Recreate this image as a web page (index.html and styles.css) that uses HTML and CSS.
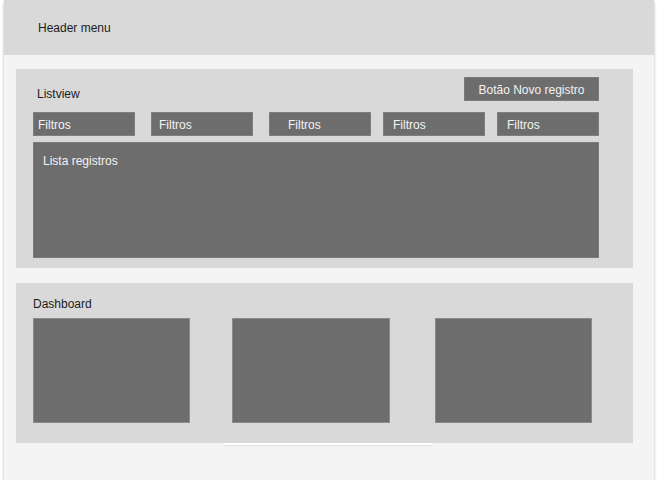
FILE: index.html
```html
<!DOCTYPE html>
<html>
<head>
<meta charset="utf-8">
<link rel="stylesheet" href="styles.css">
</head>
<body>
<div class="frame">
  <div class="header">Header menu</div>
  <div class="panel listview">
    <div class="toprow">
      <div class="title">Listview</div>
      <div class="btn">Botão Novo registro</div>
    </div>
    <div class="filters">
      <div class="filter f1">Filtros</div>
      <div class="filter f2">Filtros</div>
      <div class="filter f3">Filtros</div>
      <div class="filter f4">Filtros</div>
      <div class="filter f5">Filtros</div>
    </div>
    <div class="list">Lista registros</div>
  </div>
  <div class="panel dashboard">
    <div class="dtitle">Dashboard</div>
    <div class="cards">
      <div class="card c1"></div>
      <div class="card c2"></div>
      <div class="card c3"></div>
    </div>
  </div>
  <div class="strip"></div>
</div>
</body>
</html>
```
FILE: styles.css
```css
html, body {
  margin: 0;
  padding: 0;
  background: #ffffff;
}
body {
  font-family: "Liberation Sans", Arial, sans-serif;
  font-size: 12px;
  line-height: 14px;
  color: #1c1c1c;
}
.frame {
  margin-left: 4px;
  width: 650px;
  height: 480px;
  background: #f4f4f4;
  box-shadow: 0 2px 3px rgba(0, 0, 0, 0.28);
  overflow: hidden;
}
.header {
  height: 55px;
  background: #d9d9d9;
  box-sizing: border-box;
  padding-left: 34px;
  padding-top: 21px;
}
.panel {
  background: #d9d9d9;
  margin-left: 12px;
  width: 617px;
  box-sizing: border-box;
  padding-left: 17px;
  padding-right: 34px;
}
.listview {
  margin-top: 14px;
  height: 199px;
  padding-top: 8px;
}
.toprow {
  display: flex;
  justify-content: space-between;
  align-items: flex-start;
  height: 24px;
}
.title {
  margin-top: 10px;
  margin-left: 4px;
}
.btn {
  width: 135px;
  height: 24px;
  background: #6d6d6d;
  color: #f2f2f2;
  display: flex;
  align-items: center;
  justify-content: center;
  box-sizing: border-box;
  border: 1px solid #7a7a7a;
  padding-top: 1px;
}
.filters {
  display: flex;
  margin-top: 11px;
  height: 24px;
}
.filter {
  width: 102px;
  height: 24px;
  box-sizing: border-box;
  background: #6d6d6d;
  border: 1px solid #7e7e7e;
  color: #f4f4f4;
  display: flex;
  align-items: center;
  padding-top: 1px;
}
.f1 { padding-left: 4px; }
.f2 { margin-left: 16px; padding-left: 7px; }
.f3 { margin-left: 16px; padding-left: 18px; }
.f4 { margin-left: 12px; padding-left: 9px; }
.f5 { margin-left: 12px; padding-left: 9px; }
.list {
  margin-top: 6px;
  height: 116px;
  background: #6d6d6d;
  color: #f4f4f4;
  box-sizing: border-box;
  padding-left: 9px;
  padding-top: 11px;
  border: 1px solid #7a7a7a;
}
.dashboard {
  margin-top: 15px;
  height: 160px;
  padding-top: 14px;
}
.dtitle {
  height: 14px;
}
.cards {
  display: flex;
  margin-top: 7px;
}
.card {
  height: 105px;
  background: #6d6d6d;
  box-sizing: border-box;
  border: 1px solid #8a8a8a;
}
.c1 { width: 157px; }
.c2 { width: 158px; margin-left: 42px; }
.c3 { width: 157px; margin-left: 45px; }
.strip {
  margin-left: 220px;
  width: 209px;
  height: 2px;
  background: #ffffff;
  box-shadow: 0 1px 1px rgba(0, 0, 0, 0.08);
}
```
